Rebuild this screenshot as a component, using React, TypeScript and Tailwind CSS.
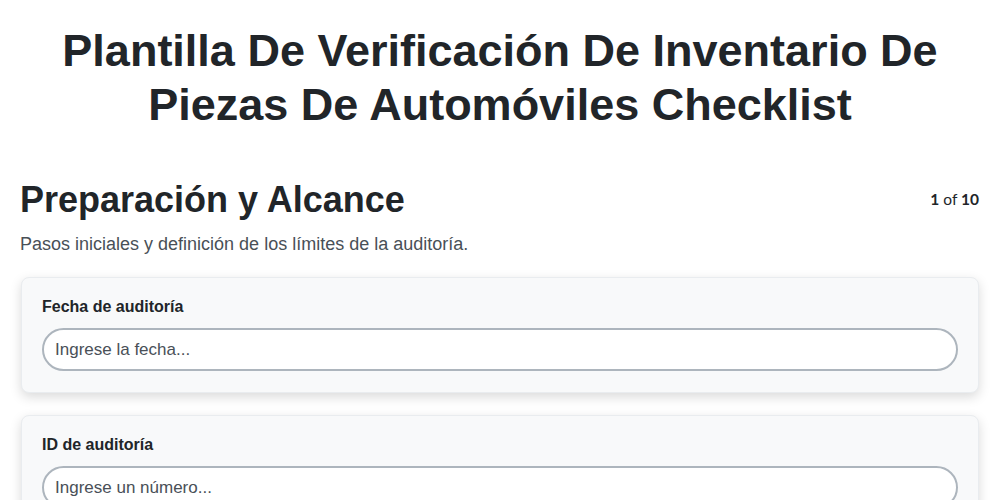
import React from "react";

const fields = [
  { label: "Fecha de auditoría", placeholder: "Ingrese la fecha..." },
  { label: "ID de auditoría", placeholder: "Ingrese un número..." },
  { label: "Auditor responsable", placeholder: "Ingrese el nombre..." },
];

export default function App() {
  return (
    <div className="min-h-screen bg-white text-[#212529]" style={{ fontFamily: '"Liberation Sans", Arial, sans-serif' }}>
      <div className="px-[21px] pt-[24px]">
        <h1 className="px-[20px] text-center text-[45px] font-bold leading-[54px]">
          Plantilla De Verificación De Inventario De Piezas De Automóviles Checklist
        </h1>
        <div className="mt-[46px] flex items-start justify-between">
          <h2 className="-ml-px text-[36px] font-bold leading-[44px]">Preparación y Alcance</h2>
          <div className="pt-[10px] text-[15.5px] text-[#212529]" style={{ fontFamily: 'Lato, "Liberation Sans", sans-serif' }}>
            <span className="font-bold">1</span> of <span className="font-bold">10</span>
          </div>
        </div>
        <p className="-ml-px mt-[10px] text-[18px] leading-[24px] text-[#495057]">
          Pasos iniciales y definición de los límites de la auditoría.
        </p>
        <div className="mt-[21px] flex flex-col gap-[22px]">
          {fields.map((f) => (
            <div
              key={f.label}
              className="rounded-lg border border-[#e9ecef] bg-[#f8f9fa] px-5 pt-[17px] pb-[21px] shadow-[0_4px_12px_rgba(0,0,0,0.15)]"
            >
              <label className="block text-[16px] font-bold leading-[24px] text-[#212529]">{f.label}</label>
              <input
                className="mt-[9px] block h-[43px] w-full rounded-full border-2 border-[#adb5bd] bg-white px-[11px] text-[17px] text-[#495057] outline-none placeholder:text-[#495057]"
                placeholder={f.placeholder}
              />
            </div>
          ))}
        </div>
      </div>
    </div>
  );
}
